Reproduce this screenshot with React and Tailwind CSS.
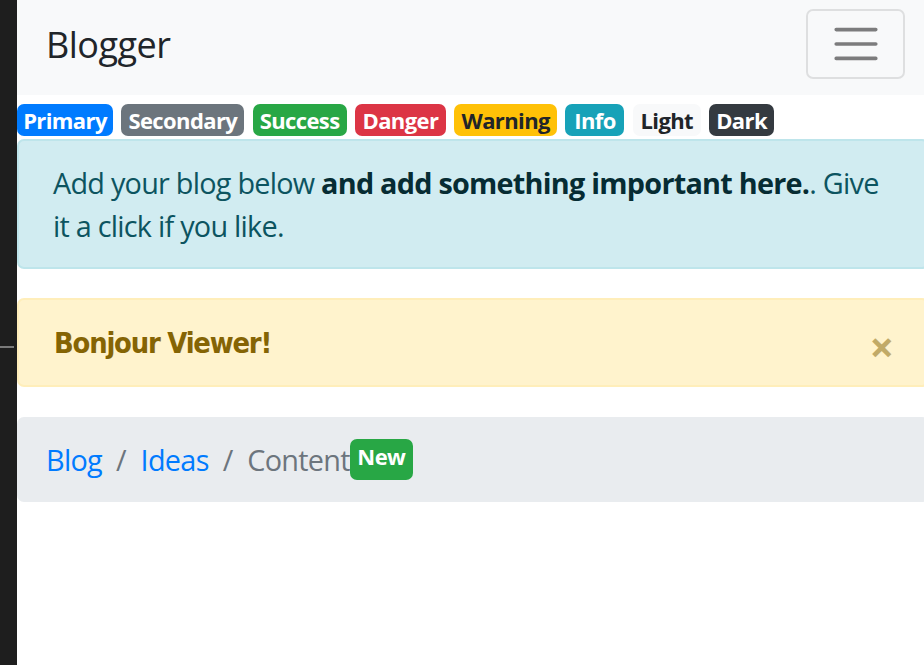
const FONT = { fontFamily: '"Open Sans", "Noto Sans", Arial, sans-serif' };

const BADGES = [
  { t: "Primary", c: "bg-[#007bff] text-white", w: "w-[96px]" },
  { t: "Secondary", c: "bg-[#6c757d] text-white", w: "w-[123px]" },
  { t: "Success", c: "bg-[#28a745] text-white", w: "w-[94px]" },
  { t: "Danger", c: "bg-[#dc3545] text-white", w: "w-[91px]" },
  { t: "Warning", c: "bg-[#ffc107] text-[#212529]", w: "w-[103px]" },
  { t: "Info", c: "bg-[#17a2b8] text-white", w: "w-[59px]" },
  { t: "Light", c: "bg-[#f8f9fa] text-[#212529]", w: "w-[68px]" },
  { t: "Dark", c: "bg-[#343a40] text-white", w: "w-[65px]" },
];

export default function App() {
  return (
    <div className="w-[924px] h-[665px] overflow-hidden flex bg-white" style={FONT}>
      {/* editor edge on the left */}
      <div className="w-[17px] shrink-0 bg-[#1e1e1e] flex flex-col">
        <div className="h-[346px]" />
        <div className="h-[2px] w-[14px] bg-[#7a7a7a]" />
      </div>

      <div className="w-[912px] shrink-0 text-[#212529]">
        {/* Navbar */}
        <nav className="h-[95px] bg-[#f8f9fa] flex justify-between pl-[29px] pr-[24px]">
          <a className="text-[36px] leading-none mt-[27px] tracking-[-0.5px] text-[#212529]">Blogger</a>
          <button className="mt-[9px] w-[99px] h-[70px] border-2 border-black/10 rounded-[7px] flex items-center justify-center">
            <svg width="54" height="54" viewBox="0 0 30 30">
              <path
                d="M4 7h22M4 15h22M4 23h22"
                stroke="rgba(0,0,0,0.5)"
                strokeWidth="2"
                strokeLinecap="round"
                strokeMiterlimit="10"
              />
            </svg>
          </button>
        </nav>

        {/* Badges */}
        <div className="h-[44px] flex items-start pt-[9px] gap-[8.3px]">
          {BADGES.map((b) => (
            <span
              key={b.t}
              className={`${b.c} ${b.w} h-[32px] rounded-[7px] flex items-center justify-center text-[22px] font-bold leading-none tracking-[-0.6px]`}
            >
              {b.t}
            </span>
          ))}
        </div>

        {/* Info alert */}
        <div className="border-2 border-[#bee5eb] bg-[#d1ecf1] text-[#0c5460] rounded-[7px] pl-[34px] pr-[35px] py-[20px] text-[28.8px] leading-[43px] tracking-[-0.75px]">
          <span className="whitespace-nowrap">
            Add your blog below <b className="font-bold text-[#062c33]">and add something important here.</b>. Give
          </span>
          <br />
          it a click if you like.
        </div>

        {/* Warning alert */}
        <div className="relative mt-[29px] border-2 border-[#ffeeba] bg-[#fff3cd] text-[#856404] rounded-[7px] pl-[35px] pr-[115px] py-[20px] text-[28.8px] leading-[43px]">
          <strong
            className="font-bold tracking-[-1.2px]"
            style={{ fontFamily: '"DejaVu Sans Condensed", "DejaVu Sans", sans-serif', fontStretch: "condensed" }}
          >
            Bonjour Viewer!
          </strong>
          <button className="absolute right-0 top-0 h-full flex items-center pt-[8px] pl-[36px] pr-[33px] text-[43px] font-bold leading-none text-[#856404] opacity-50">
            ×
          </button>
        </div>

        {/* Breadcrumb */}
        <nav className="mt-[30px] bg-[#e9ecef] rounded-[7px] pl-[29px] py-[21px] text-[28.8px] leading-[43px] flex items-start">
          <a className="text-[#007bff] tracking-[-0.7px]">Blog</a>
          <span className="px-[14px] text-[#6c757d]">/</span>
          <a className="text-[#007bff] tracking-[-0.7px]">Ideas</a>
          <span className="px-[14px] text-[#6c757d]">/</span>
          <span className="text-[#6c757d] tracking-[-0.7px]">Content</span>
          <span className="mt-[1px] w-[63px] h-[41px] bg-[#28a745] text-white rounded-[7px] flex justify-center pt-[6px] text-[22px] font-bold leading-none tracking-[-0.6px]">
            New
          </span>
        </nav>
      </div>
    </div>
  );
}
